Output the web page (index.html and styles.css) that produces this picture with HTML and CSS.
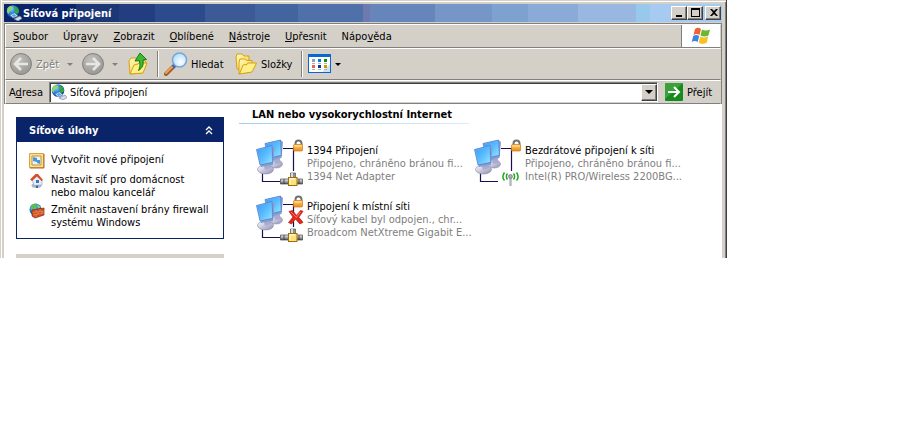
FILE: index.html
```html
<!DOCTYPE html>
<html lang="cs">
<head>
<meta charset="utf-8">
<title>Síťová připojení</title>
<link rel="stylesheet" href="styles.css">
</head>
<body>
<svg class="defs" width="0" height="0" aria-hidden="true">
  <defs>
    <linearGradient id="screen" x1="0" y1="0" x2="1" y2="1"><stop offset="0" stop-color="#3c9cf8"/><stop offset=".5" stop-color="#58bcff"/><stop offset="1" stop-color="#98e4ff"/></linearGradient>
    <linearGradient id="stand" x1="0" y1="0" x2="1" y2="1"><stop offset="0" stop-color="#ffffff"/><stop offset="1" stop-color="#8c8cb4"/></linearGradient>
    <linearGradient id="gold" x1="0" y1="0" x2="0" y2="1"><stop offset="0" stop-color="#ffd070"/><stop offset="1" stop-color="#ee8a18"/></linearGradient>
    <linearGradient id="paper" x1="0" y1="0" x2="1" y2="1"><stop offset="0" stop-color="#fffbb8"/><stop offset="1" stop-color="#f4cc50"/></linearGradient>
    <linearGradient id="metal" x1="0" y1="0" x2="0" y2="1"><stop offset="0" stop-color="#eeeeee"/><stop offset=".5" stop-color="#a8a8a8"/><stop offset="1" stop-color="#505050"/></linearGradient>
    <radialGradient id="disc" cx=".4" cy=".3" r=".7"><stop offset="0" stop-color="#c2c0bc"/><stop offset="1" stop-color="#9a9894"/></radialGradient>
    <radialGradient id="globe" cx=".35" cy=".3" r=".8"><stop offset="0" stop-color="#8cd0ff"/><stop offset=".5" stop-color="#2474d8"/><stop offset="1" stop-color="#08307c"/></radialGradient>
    <radialGradient id="lens" cx=".6" cy=".65" r=".7"><stop offset="0" stop-color="#ffffff"/><stop offset="1" stop-color="#a8dcfa"/></radialGradient>
  </defs>
  <symbol id="net" viewBox="0 0 16 16">
    <circle cx="7" cy="6.500" r="6.300" fill="url(#globe)"/>
    <path d="M1.500 3 4 1l3 1-1 2.500L3.500 6 3 9 1 7z" fill="#8ed66c"/>
    <path d="M8 1l4 2 1.200 4-2.500 2L8 6.500 9 4z" fill="#30a83c"/>
    <path d="M4 10 8.500 8l3.500 3-5 2z" fill="#d8ecfa" stroke="#6a84a4" stroke-width=".6"/>
    <path d="M5.500 10.200 8.200 9l2.300 2-3.300 1.100z" fill="#4aa8ee"/>
    <path d="M8 14l6-3 2 2.500L12 16z" fill="#d4dce8" stroke="#6c7c98" stroke-width=".6"/>
  </symbol>
  <symbol id="pc" viewBox="0 0 48 48">
    <path d="M27 9.500h10.500V32M6.500 34v8.500H24" fill="none" stroke="#1c0c50" stroke-width="1.200"/>
    <ellipse cx="20" cy="25" rx="6.500" ry="4" fill="url(#stand)" stroke="#8688a8" stroke-width=".6"/>
    <path d="M17 18l6-1 2 7-6 1z" fill="#a8acd0"/>
    <path d="M9 4.500 24.500 1 27 3l-1.500 16-12 3z" fill="#8c9ccc"/>
    <path d="M9 4.500 24.500 1l1 15.500L12 19.500z" fill="#6cb0f4" stroke="#5080cc" stroke-width=".7"/>
    <path d="M10 5.300 23.900 2l.7 13.700L12.600 18.500z" fill="url(#screen)"/>
    <ellipse cx="9.500" cy="30.500" rx="8" ry="4.500" fill="url(#stand)" stroke="#8688a8" stroke-width=".6"/>
    <path d="M7 23l7-1 1 7-6 2z" fill="#a8acd0"/>
    <path d="M.5 10.500 16 6.500l2.500 2L17 26 5 28z" fill="#8c9ccc"/>
    <path d="M.5 10.500 16 6.500l1 17L4 26z" fill="#6cb0f4" stroke="#5080cc" stroke-width=".7"/>
    <path d="M1.500 11.300 15.300 7.700l.8 15.100L4.600 25.200z" fill="url(#screen)"/>
    <path d="M39.500 7V4.500a3 3 0 0 1 6 0V7" fill="none" stroke="#77716c" stroke-width="2"/>
    <rect x="37.500" y="5.500" width="9" height="6.500" rx="1" fill="url(#gold)" stroke="#cc7818" stroke-width=".7"/>
    <path d="M38.500 7h7" stroke="#ffe6a4"/>
  </symbol>
  <symbol id="plug" viewBox="0 0 48 48">
    <path d="M34.500 34h5v7h-5z" fill="#909090" stroke="#444" stroke-width=".6"/>
    <path d="M36 34v7" stroke="#f4f4f4" stroke-width="1.500"/>
    <path d="M24.500 40h22v5h-22z" fill="url(#metal)" stroke="#444" stroke-width=".7"/>
    <path d="M28 40v5M43 40v5" stroke="#333" stroke-width=".8"/>
    <rect x="32.500" y="38.500" width="8.500" height="8" fill="#ffe070" stroke="#a06e10"/>
    <path d="M34 45v-5h5" fill="none" stroke="#fff8cc" stroke-width="1.400"/>
  </symbol>
  <symbol id="radio" viewBox="0 0 48 48">
    <path d="M36.500 39v8" stroke="#b4b4c4" stroke-width="2.400"/>
    <circle cx="36.500" cy="37.500" r="2" fill="#a8a8b8" stroke="#666c7a" stroke-width=".6"/>
    <path d="M33.500 34.500c-1.500 2-1.500 4 0 6M39.500 34.500c1.500 2 1.500 4 0 6M30.500 33.500c-2.200 3-2.200 5.500 0 8M42.500 33.500c2.200 3 2.200 5.500 0 8" fill="none" stroke="#20a820" stroke-width="1.500"/>
  </symbol>
  <symbol id="cross" viewBox="0 0 48 48">
    <path d="M33 16.500l3.500-1 4 5 4-5 2.500.8-4.200 6 4.200 5-3 1.700-4.500-5-4 5-3-1.500 4.500-5.500z" fill="#e02820" stroke="#c02018" stroke-width=".8"/>
    <path d="M35 17l5.300 5.500L44.500 17" fill="none" stroke="#ff8068"/>
  </symbol>
  <symbol id="folders" viewBox="0 0 24 24">
    <path d="M2 5l1-3h5l2 2h5v5l-3 9-9-1z" fill="url(#paper)" stroke="#d8a010"/>
    <path d="M5 10l1-3h5l2 1.500h5V12l-2 8-11 2z" fill="url(#paper)" stroke="#d8a010"/>
    <path d="M5.500 22 9 13l4-.5L14 11h8.500L18 20z" fill="#fff088" stroke="#d8a010"/>
  </symbol>
</svg>

<main class="window">
  <header class="titlebar">
    <svg class="i16"><use href="#net"/></svg>
    <h1>Síťová připojení</h1>
    <div class="controls">
      <button aria-label="Minimalizovat"><svg viewBox="0 0 12 10"><path d="M2 7h6v2H2z"/></svg></button>
      <button aria-label="Maximalizovat"><svg viewBox="0 0 12 10"><path d="M1 0h9v9H1zM2 2v6h7V2z" fill-rule="evenodd"/></svg></button>
      <button class="close" aria-label="Zavřít"><svg viewBox="0 0 12 10"><path d="M2 1h2l2 2 2-2h2L7 4.500 10 8H8L6 6 4 8H2l3-3.500z"/></svg></button>
    </div>
  </header>

  <div class="bars">
    <nav class="menubar">
      <button><u>S</u>oubor</button><button>Úpr<u>a</u>vy</button><button><u>Z</u>obrazit</button><button><u>O</u>blíbené</button><button><u>N</u>ástroje</button><button><u>U</u>přesnit</button><button>Nápo<u>v</u>ěda</button>
      <div class="flag">
        <svg viewBox="0 0 20 20">
          <path d="M4 3c2-2 4-1.500 6 0L8.500 9c-2-1.500-4-1.500-6 0z" fill="#f06030"/>
          <path d="M11 3.500c2 1.200 5 1.500 8 0L17.500 9.500c-3 1.500-6 1-8 0z" fill="#68b830"/>
          <path d="M2.200 10c2-1.500 4-1.500 6 0l-1.500 6c-2-1.500-4-1.500-6 0z" fill="#3c84e0"/>
          <path d="M9.200 10.500c2 1.200 5 1.500 8 0l-1.500 6.300c-3 1.700-6 1.200-8 0z" fill="#f8c020"/>
        </svg>
      </div>
    </nav>

    <div class="toolbar">
      <button class="back" disabled>
        <svg class="i24" viewBox="0 0 24 24"><circle cx="11" cy="12" r="10.500" fill="url(#disc)" stroke="#85827e"/><path d="M18 12H6M11 6l-6 6 6 6" fill="none" stroke="#e8e6e2" stroke-width="2.600"/></svg>
        <span>Zpět</span><i class="arrow"></i>
      </button>
      <button class="forward" disabled aria-label="Vpřed">
        <svg class="i24" viewBox="0 0 24 24"><circle cx="11" cy="12" r="10.500" fill="url(#disc)" stroke="#85827e"/><path d="M4 12h12M11 6l6 6-6 6" fill="none" stroke="#e8e6e2" stroke-width="2.600"/></svg>
        <i class="arrow"></i>
      </button>
      <button class="up" aria-label="Nahoru">
        <svg class="i24" viewBox="0 0 24 24">
          <path d="M2 9l2-3h5l2 2h6l2 2-4 11-12 1z" fill="url(#paper)" stroke="#d8a010"/>
          <path d="M3 22 7 13l4-1 1-1h8l-4 10z" fill="#fff088" stroke="#d8a010"/>
          <path d="M8 9 13 1l6.500 6.500-3.500.5c.8 5-.5 8-4.500 10.500 1.800-3.500 1.800-6 .8-9.800z" fill="#3cba30" stroke="#14781c"/>
        </svg>
      </button>
      <i class="rule"></i>
      <button class="search">
        <svg class="i24" viewBox="0 0 24 24">
          <path d="M2 22l8-8" stroke="#a05c28" stroke-width="4" stroke-linecap="round"/>
          <path d="M2 21l7-7" stroke="#f0a058" stroke-width="2" stroke-linecap="round"/>
          <path d="M9 15l3-3" stroke="#2468c8" stroke-width="3.500"/>
          <circle cx="15.500" cy="8" r="7" fill="url(#lens)" stroke="#78a4dc" stroke-width="1.600"/>
        </svg>
        <span>Hledat</span>
      </button>
      <button class="folders"><svg class="i24"><use href="#folders"/></svg><span>Složky</span></button>
      <i class="rule"></i>
      <button class="views" aria-label="Zobrazení">
        <svg class="i24" viewBox="0 0 24 20">
          <rect x=".5" y=".5" width="22" height="18" fill="#fff" stroke="#0868d0"/>
          <path d="M0 0h23v3H0z" fill="#0868d0"/>
          <path d="M14 18l8-8v8z" fill="#cfe4f2"/>
          <path d="M4 5h3v3H4z" fill="#9898d0"/><path d="M10 5h3v3h-3z" fill="#0878e8"/><path d="M16 5h3v3h-3z" fill="#089008"/>
          <path d="M4 11h3v3H4z" fill="#f06050"/><path d="M10 11h3v3h-3z" fill="#0838a0"/><path d="M16 11h3v3h-3z" fill="#d09800"/>
          <path d="M4 9.500h3M10 9.500h3M16 9.500h3M4 15.500h3M10 15.500h3M16 15.500h3" stroke="#b0b0b0"/>
        </svg>
        <i class="arrow"></i>
      </button>
    </div>

    <form class="address">
      <label for="addr">A<u>d</u>resa</label>
      <div class="combo">
        <svg class="i16"><use href="#net"/></svg>
        <input id="addr" type="text" value="Síťová připojení">
        <button type="button" aria-label="Rozbalit"><i class="arrow"></i></button>
      </div>
      <button class="go" type="button">
        <svg viewBox="0 0 18 18"><rect width="18" height="18" rx="1" fill="#148c1c"/><path d="M0 0h18L0 16z" fill="#54b04c" opacity=".6"/><path d="M3 9h10M9 4l5 5-5 5" fill="none" stroke="#fff" stroke-width="2"/></svg>
        <span>Přejít</span>
      </button>
    </form>
  </div>

  <div class="content">
    <aside class="side">
      <section class="tasks">
        <h2>Síťové úlohy
          <svg viewBox="0 0 9 9"><path d="M1 4l3-3 3 3M1 8l3-3 3 3" fill="none" stroke="#fff" stroke-width="1.300"/></svg>
        </h2>
        <ul>
          <li>
            <svg class="i16" viewBox="0 0 16 16"><path d="M.5.500h14v14H.5z" fill="#fbe090" stroke="#dca040"/><path d="M15 1v14H1" fill="none" stroke="#a86c20"/><path d="M3 3h9v9H3z" fill="#e8f4fc" stroke="#c89038"/><path d="M4 4l4 1v4L4 8zM8 7l3 0v4l-3-1z" fill="#4898d8"/></svg>
            <a href="#">Vytvořit nové připojení</a>
          </li>
          <li>
            <svg class="i16" viewBox="0 0 16 16"><ellipse cx="7.500" cy="12.500" rx="5" ry="2.500" fill="#a8b8d0"/><path d="M7 11h2v4H7z" fill="#406490"/><path d="M3 6l4.500-4L13 7v5l-8 .5z" fill="#e4eefa" stroke="#8898b8" stroke-width=".6"/><path d="M1 6.500 6.500 1 9 1l5 6-1.500 1L8 3.500 3 8z" fill="#dc4c28"/><path d="M7 7h3v3H7z" fill="#3c78b8"/></svg>
            <a href="#">Nastavit síť pro domácnost nebo malou kancelář</a>
          </li>
          <li>
            <svg class="i16" viewBox="0 0 16 16"><circle cx="6.500" cy="6.500" r="6" fill="url(#globe)"/><path d="M2 2l4-1.500L8 3 5 6 2 7z" fill="#58c050"/><path d="M8 1l4 3-3 2z" fill="#88d068"/><path d="M3 7l12-2v7L6 15l-3-2z" fill="#cc4c20" stroke="#842808" stroke-width=".7"/><path d="M3.500 9.500 15 8M4 12l11-2M7 7v2M11 6v2M9 9v2M13 8v2M7 11.500V14" stroke="#f0a070" stroke-width=".6"/></svg>
            <a href="#">Změnit nastavení brány firewall systému Windows</a>
          </li>
        </ul>
      </section>
      <div class="next"></div>
    </aside>

    <section class="connections">
      <h2>LAN nebo vysokorychlostní Internet</h2>
      <ul>
        <li>
          <svg><use href="#pc"/><use href="#plug"/></svg>
          <div><h3>1394 Připojení</h3><p>Připojeno, chráněno bránou fi...</p><p>1394 Net Adapter</p></div>
        </li>
        <li>
          <svg><use href="#pc"/><use href="#radio"/></svg>
          <div><h3>Bezdrátové připojení k síti</h3><p>Připojeno, chráněno bránou fi...</p><p>Intel(R) PRO/Wireless 2200BG...</p></div>
        </li>
        <li>
          <svg><use href="#pc"/><use href="#plug"/><use href="#cross"/></svg>
          <div><h3>Připojení k místní síti</h3><p>Síťový kabel byl odpojen., chr...</p><p>Broadcom NetXtreme Gigabit E...</p></div>
        </li>
      </ul>
    </section>
  </div>
</main>
</body>
</html>
```
FILE: styles.css
```css
* { box-sizing: border-box; }
body {
  margin: 0;
  background: #fff;
  color: #000;
  font: 11px/13px Tahoma, "DejaVu Sans Condensed", "DejaVu Sans", sans-serif;
}
h1, h2, h3, p, ul { margin: 0; padding: 0; font-size: 11px; font-weight: normal; }
ul { list-style: none; }
svg { display: block; flex: none; }
button { font: inherit; color: inherit; border: 0; padding: 0; background: none; white-space: nowrap; }
a { color: inherit; text-decoration: none; }
.defs { position: absolute; }
.i16 { width: 16px; height: 16px; }
.i24 { width: 24px; height: 24px; }

.window {
  max-width: 727px;
  padding: 4px 4px 0;
  background: #d4d0c8;
  border-right: 1px solid #404040;
  box-shadow: inset 1px 0 #d4d0c8, inset 2px 0 #fff, inset 0 1px #d4d0c8, inset 0 2px #fff, inset -1px 0 #808080;
}
.titlebar {
  display: flex;
  align-items: center;
  height: 18px;
  padding: 0 1px 0 2px;
  color: #fff;
  background: linear-gradient(90deg,
    #0a246a 10%, #1b3776 10% 16%, #223e80 16% 21%, #2c4b8c 21% 28%,
    #3c5b96 28% 35%, #42649f 35% 41%, #5070aa 41% 50%, #6c7ab0 50% 51%,
    #6685bb 51% 60%, #7696c8 60% 68%, #7ea2d0 68% 73%, #8aaad8 73% 80%,
    #98b8e2 80% 88%, #98c8ec 88% 90%, #a6caf0 90%);
}
.titlebar h1 { flex: 1; margin-left: 1px; font-weight: bold; }
.controls { display: flex; }
.controls button {
  width: 16px;
  height: 14px;
  padding: 1px 2px;
  background: #d4d0c8;
  border: 1px solid;
  border-color: #fff #404040 #404040 #fff;
  box-shadow: inset -1px -1px #808080;
}
.controls svg { width: 12px; height: 10px; }
.controls .close { margin-left: 2px; }

.bars { margin-top: 1px; border: 1px solid #808080; border-width: 1px 1px 0; }
.menubar, .toolbar, .address {
  display: flex;
  align-items: center;
  border: 1px solid;
  border-color: #fff transparent #808080 #fff;
}
.menubar { height: 24px; }
.menubar button { padding: 0 8px 0 7px; }
.flag {
  display: flex;
  align-items: center;
  justify-content: center;
  align-self: stretch;
  width: 39px;
  margin-left: auto;
  background: #fff;
  border-left: 1px solid #808080;
}
.flag svg { width: 20px; height: 20px; }
.toolbar { height: 32px; padding-left: 4px; }
.toolbar button { display: flex; align-items: center; gap: 3px; height: 24px; }
.back { width: 72px; color: #808080; text-shadow: 1px 1px #fff; }
.forward .arrow, .back .arrow { color: #808080; }
.toolbar .back { gap: 2px; }
.back .arrow { margin-left: 6px; }
.toolbar .forward { width: 45px; gap: 6px; }
.up { width: 25px; }
.arrow {
  width: 0;
  border: 3px solid transparent;
  border-top-color: currentColor;
  border-bottom: 0;
}
.rule { align-self: stretch; margin: 2px 5px; border-left: 1px solid #808080; border-right: 1px solid #fff; }
.search { width: 70px; }
.folders { width: 62px; }
.views .i24 { height: 20px; }
.address { height: 24px; padding-left: 3px; }
.address label { width: 40px; }
.combo {
  display: flex;
  flex: 1;
  align-items: center;
  height: 21px;
  padding-left: 1px;
  background: #fff;
  border: 1px solid;
  border-color: #808080 #fff #d4d0c8 #808080;
  box-shadow: inset 1px 1px #404040;
}
.combo input { flex: 1; min-width: 0; padding: 0 3px; border: 0; background: none; font: inherit; color: inherit; }
.combo button {
  display: flex;
  align-items: center;
  justify-content: center;
  width: 16px;
  height: 17px;
  background: #d4d0c8;
  border: 1px solid;
  border-color: #fff #404040 #404040 #fff;
  box-shadow: inset -1px -1px #808080;
}
.combo .arrow { border-width: 4px 4px 0; }
.go { display: flex; align-items: center; gap: 4px; width: 62px; padding-left: 7px; }
.go svg { width: 18px; height: 18px; }

.content { display: flex; background: #fff; }
.side { width: 235px; flex: none; padding: 13px 15px 0 12px; }
.tasks { border: 1px solid #0a246a; min-height: 122px; }
.tasks h2 {
  display: flex;
  align-items: center;
  justify-content: space-between;
  height: 24px;
  padding: 0 9px 0 12px;
  background: #0a246a;
  color: #fff;
  font-weight: bold;
}
.tasks h2 svg { width: 9px; height: 9px; }
.tasks ul { display: grid; gap: 4px; padding: 11px 12px 9px; }
.tasks li { display: flex; gap: 6px; min-height: 16px; }
.next { height: 4px; margin-top: 15px; background: #d4d0c8; }
.connections { flex: 1; min-width: 0; padding-top: 3px; }
.connections h2 {
  width: 230px;
  padding-left: 13px;
  line-height: 16px;
  font-weight: bold;
  white-space: nowrap;
  border-bottom: 1px solid;
  border-image: linear-gradient(90deg, #a6caf0, #dcecf8) 1;
}
.connections ul { display: grid; grid-template-columns: repeat(auto-fill, 218px); row-gap: 8px; padding: 15px 0 0 17px; }
.connections li { display: flex; gap: 3px; height: 48px; white-space: nowrap; }
.connections li svg { width: 48px; height: 48px; }
.connections li div { padding-top: 5px; }
.connections p { color: #808080; }
```
